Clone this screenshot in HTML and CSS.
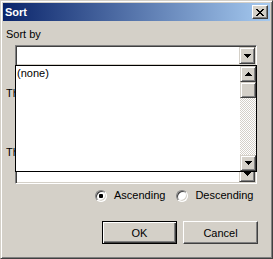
FILE: index.html
```html
<!DOCTYPE html>
<html>
<head>
<meta charset="utf-8">
<link rel="stylesheet" href="styles.css">
</head>
<body>
<div class="window">
  <div class="titlebar">
    <span class="title">Sort</span>
    <button class="close"><svg width="8" height="7" viewBox="0 0 8 7"><path d="M0 0h2v1H0zM6 0h2v1H6zM1 1h2v1H1zM5 1h2v1H5zM2 2h4v1H2zM3 3h2v1H3zM2 4h4v1H2zM1 5h2v1H1zM5 5h2v1H5zM0 6h2v1H0zM6 6h2v1H6z"/></svg></button>
  </div>
  <div class="content">
    <div class="label">Sort by</div>
    <div class="combo"><div class="combo-field"></div><div class="btn3d arrow-btn"><svg width="7" height="4" viewBox="0 0 7 4"><path d="M0 0h7v1H0zM1 1h5v1H1zM2 2h3v1H2zM3 3h1v1H3z"/></svg></div></div>
    <div class="label gap">Then by</div>
    <div class="combo"><div class="combo-field"></div><div class="btn3d arrow-btn"><svg width="7" height="4" viewBox="0 0 7 4"><path d="M0 0h7v1H0zM1 1h5v1H1zM2 2h3v1H2zM3 3h1v1H3z"/></svg></div></div>
    <div class="label gap">Then by</div>
    <div class="combo"><div class="combo-field"></div><div class="btn3d arrow-btn"><svg width="7" height="4" viewBox="0 0 7 4"><path d="M0 0h7v1H0zM1 1h5v1H1zM2 2h3v1H2zM3 3h1v1H3z"/></svg></div></div>
    <div class="radios">
      <label class="radio-item"><span class="radio checked"><span class="dot"></span></span><span class="asc">Ascending</span></label>
      <label class="radio-item"><span class="radio"></span><span>Descending</span></label>
    </div>
    <div class="buttons">
      <button class="push default"><span>OK</span></button>
      <button class="push"><span>Cancel</span></button>
    </div>
  </div>
  <div class="dropdown">
    <div class="list">
      <div class="item">(none)</div>
    </div>
    <div class="scrollbar">
      <div class="btn3d sb-btn"><svg width="7" height="4" viewBox="0 0 7 4"><path d="M3 0h1v1H3zM2 1h3v1H2zM1 2h5v1H1zM0 3h7v1H0z"/></svg></div>
      <div class="btn3d thumb"></div>
      <div class="track"></div>
      <div class="btn3d sb-btn"><svg width="7" height="4" viewBox="0 0 7 4"><path d="M0 0h7v1H0zM1 1h5v1H1zM2 2h3v1H2zM3 3h1v1H3z"/></svg></div>
    </div>
  </div>
</div>
</body>
</html>
```
FILE: styles.css
```css
* { box-sizing: border-box; }
html, body { margin: 0; padding: 0; background: #d4d0c8; }
body {
  font-family: "Liberation Sans", Arial, sans-serif;
  font-size: 11px;
  color: #000;
}
.window {
  position: relative;
  width: 273px;
  height: 259px;
  background: #d4d0c8;
  border: 1px solid;
  border-color: #d4d0c8 #404040 #404040 #d4d0c8;
  box-shadow: inset 1px 1px #fff, inset -1px -1px #808080;
  padding: 2px;
  display: flex;
  flex-direction: column;
}
.titlebar {
  height: 18px;
  background: linear-gradient(to right, #0a246a, #a6caf0);
  display: flex;
  align-items: center;
  justify-content: space-between;
  padding: 0 2px 0 2px;
}
.title {
  color: #fff;
  font-weight: bold;
  font-size: 11px;
  line-height: 13px;
}
.close {
  width: 16px;
  height: 14px;
  padding: 0;
  margin: 0;
  background: #d4d0c8;
  border: 1px solid;
  border-color: #fff #404040 #404040 #fff;
  box-shadow: inset -1px -1px #808080;
  display: flex;
  align-items: center;
  justify-content: center;
}
.close svg { display: block; margin-left: -1px; }
.content {
  flex: 1;
  padding: 7px 12px 0 3px;
  display: flex;
  flex-direction: column;
}
.label {
  line-height: 13px;
  height: 13px;
  margin-bottom: 4px;
}
.label.gap { margin-top: 21px; }
.combo {
  margin-left: 9px;
  width: 242px;
  height: 21px;
  border: 1px solid;
  border-color: #808080 #fff #fff #808080;
  box-shadow: inset 1px 1px #404040, inset -1px -1px #d4d0c8;
  background: #fff;
  padding: 2px;
  display: flex;
}
.combo-field { flex: 1; }
.btn3d {
  background: #d4d0c8;
  border: 1px solid;
  border-color: #d4d0c8 #404040 #404040 #d4d0c8;
  box-shadow: inset 1px 1px #fff, inset -1px -1px #808080;
  display: flex;
  align-items: center;
  justify-content: center;
}
.btn3d svg { display: block; }
.arrow-btn {
  width: 16px;
  height: 17px;
  margin-top: -1px;
  margin-right: -1px;
}
.radios {
  margin-top: 5px;
  padding-left: 89px;
  display: flex;
  gap: 11px;
  height: 13px;
}
.radio-item {
  display: flex;
  align-items: center;
  gap: 7px;
  line-height: 13px;
}
.radio {
  width: 12px;
  height: 12px;
  border-radius: 50%;
  background: #fff;
  border: 1px solid;
  border-color: #808080 #fff #fff #808080;
  box-shadow: inset 1px 1px #404040, inset -1px -1px #d4d0c8;
  display: flex;
  align-items: center;
  justify-content: center;
}
.dot {
  width: 4px;
  height: 4px;
  border-radius: 1px;
  background: #000;
}
.buttons {
  margin-top: 19px;
  display: flex;
  justify-content: flex-end;
  gap: 6px;
}
.push {
  width: 75px;
  height: 23px;
  margin: 0;
  padding: 0;
  font-family: inherit;
  font-size: 11px;
  color: #000;
  background: #d4d0c8;
  border: 1px solid;
  border-color: #fff #404040 #404040 #fff;
  box-shadow: inset -1px -1px #808080;
}
.push.default {
  border: 1px solid #000;
  box-shadow: inset 1px 1px #fff, inset -1px -1px #404040, inset -2px -2px #808080;
}
.dropdown {
  position: absolute;
  left: 14px;
  top: 64px;
  width: 242px;
  height: 107px;
  border: 1px solid #000;
  background: #fff;
  display: flex;
}
.list { flex: 1; padding: 1px 0 0 1px; }
.item { line-height: 13px; height: 13px; }
.scrollbar {
  width: 16px;
  display: flex;
  flex-direction: column;
}
.sb-btn { height: 16px; }
.thumb { height: 16px; }
.track {
  flex: 1;
  background: repeating-conic-gradient(#fff 0 25%, #d4d0c8 0 50%) 0 0 / 2px 2px;
}
```
